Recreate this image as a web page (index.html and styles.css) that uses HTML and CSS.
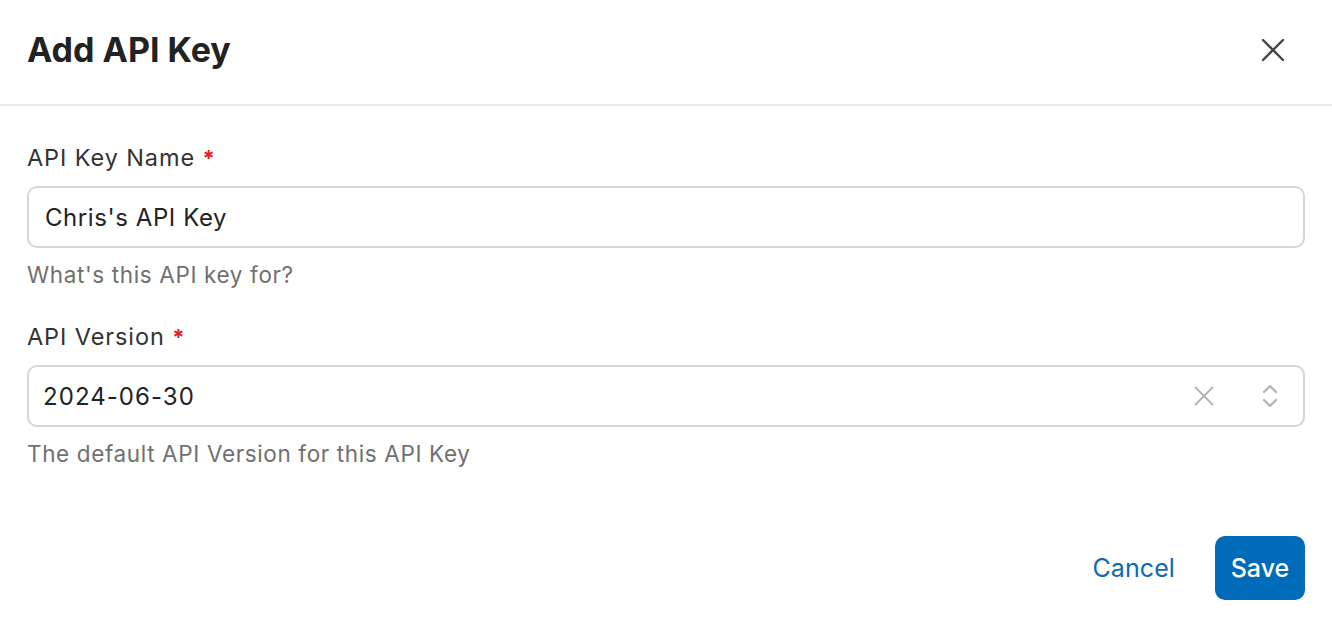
FILE: index.html
```html
<!DOCTYPE html>
<html>
<head>
<meta charset="utf-8">
<link rel="stylesheet" href="styles.css">
</head>
<body>
<div class="modal">
  <header class="header">
    <h1 class="title">Add API Key</h1>
    <button class="close" aria-label="Close">
      <svg width="24" height="24" viewBox="0 0 24 24"><path d="M2 2L22 22M22 2L2 22" stroke="#444" stroke-width="2.4" stroke-linecap="round" fill="none"/></svg>
    </button>
  </header>
  <main class="body">
    <div class="field">
      <label class="label">API Key Name <span class="req">*</span></label>
      <div class="input"><span class="value value-name">Chris's API Key</span></div>
      <div class="help">What's this API key for?</div>
    </div>
    <div class="field field-2">
      <label class="label">API Version <span class="req">*</span></label>
      <div class="input select">
        <span class="value value-ver">2024-06-30</span>
        <span class="icons">
          <svg class="clear" width="20" height="20" viewBox="0 0 20 20"><path d="M1.5 1.5L18.5 18.5M18.5 1.5L1.5 18.5" stroke="#b5b5b5" stroke-width="2" stroke-linecap="round" fill="none"/></svg>
          <svg class="chev" width="16" height="26" viewBox="0 0 16 26"><path d="M2 9L8 3L14 9M2 17L8 23L14 17" stroke="#b5b5b5" stroke-width="2.4" stroke-linecap="round" stroke-linejoin="round" fill="none"/></svg>
        </span>
      </div>
      <div class="help">The default API Version for this API Key</div>
    </div>
  </main>
  <footer class="footer">
    <button class="btn-cancel">Cancel</button>
    <button class="btn-save">Save</button>
  </footer>
</div>
</body>
</html>
```
FILE: styles.css
```css
* { box-sizing: border-box; }
html, body { margin: 0; padding: 0; background: #fff; }
body {
  font-family: Inter, "Noto Sans", "Liberation Sans", sans-serif;
  color: #262626;
  width: 1332px;
  height: 626px;
  overflow: hidden;
}
.modal { display: flex; flex-direction: column; height: 626px; }
.header {
  height: 106px;
  border-bottom: 2px solid #e8e8e8;
  display: flex;
  align-items: center;
  justify-content: space-between;
  padding: 0 47px 4px 27px;
}
.title {
  margin: 0;
  font-size: 34px;
  font-weight: 700;
  letter-spacing: 0;
  color: #222;
  line-height: 40px;
}
.close {
  border: 0; background: none; padding: 0; width: 24px; height: 24px;
  display: flex; align-items: center; justify-content: center;
}
.body { padding: 36px 27px 0 27px; }
.field { display: flex; flex-direction: column; }
.field-2 { margin-top: 31px; }
.label {
  font-size: 23.5px;
  line-height: 32px;
  color: #333;
  letter-spacing: 0.9px;
}
.req { color: #e0221c; font-weight: 700; font-size: 22px; }
.input {
  margin-top: 12px;
  height: 62px;
  border: 2px solid #d6d6d6;
  border-radius: 10px;
  display: flex;
  align-items: center;
  padding: 0 16px;
}
.value { font-size: 24px; color: #222; letter-spacing: 0.57px; }
.value-ver { margin-left: -2px; letter-spacing: 1.05px; }
.select { justify-content: space-between; padding-right: 25px; }
.icons { display: flex; align-items: center; gap: 48px; }
.help {
  margin-top: 12px;
  font-size: 22.5px;
  line-height: 30px;
  color: #707070;
  letter-spacing: 0.63px;
}
.footer {
  margin-top: auto;
  display: flex;
  justify-content: flex-end;
  align-items: center;
  gap: 24px;
  padding: 0 27px 26px 0;
}
button { font-family: inherit; cursor: pointer; }
.btn-cancel {
  border: 0; background: none; color: #0b6bb5;
  font-size: 25px; padding: 0 16px 0 17px; height: 64px;
  letter-spacing: 0.1px;
}
.btn-save {
  border: 0; background: #006bb8; color: #fff;
  font-size: 25px; font-weight: 500;
  height: 64px; width: 90px;
  border-radius: 10px;
}
```
